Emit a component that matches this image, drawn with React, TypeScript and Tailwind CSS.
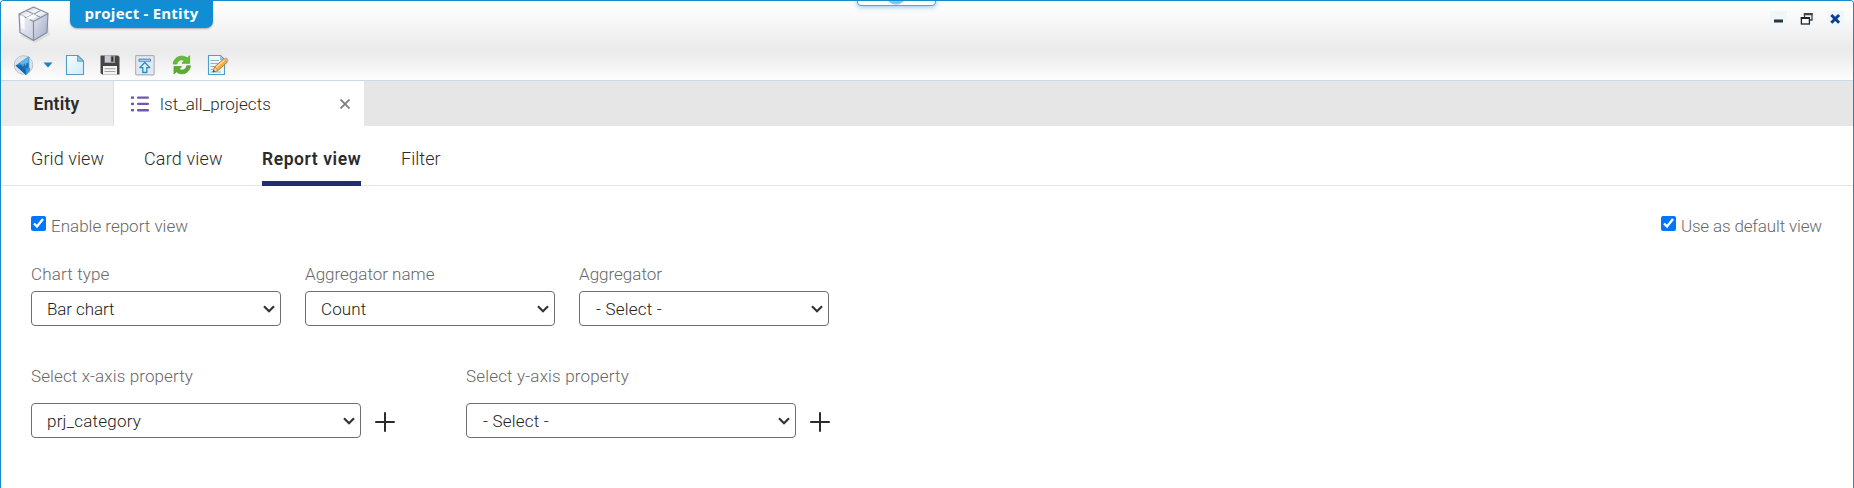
import React from "react";

function CubeIcon() {
  return (
    <svg width="36" height="40" viewBox="0 0 36 40" className="shrink-0">
      <defs>
        <linearGradient id="cubeTop" x1="0" y1="0" x2="1" y2="1">
          <stop offset="0" stopColor="#b9bfd2" />
          <stop offset="0.5" stopColor="#ffffff" />
          <stop offset="1" stopColor="#b3bace" />
        </linearGradient>
        <linearGradient id="cubeLeft" x1="0" y1="0" x2="1" y2="1">
          <stop offset="0" stopColor="#f4f6fb" />
          <stop offset="1" stopColor="#c8cee0" />
        </linearGradient>
        <linearGradient id="cubeRight" x1="0" y1="0" x2="1" y2="1">
          <stop offset="0" stopColor="#e4e8f2" />
          <stop offset="1" stopColor="#9fa8c2" />
        </linearGradient>
      </defs>
      <path d="M5 33 L20 40 L35 32 L33 20 Z" fill="#000" opacity="0.08" />
      <path d="M4 11 L18.5 4 L33 10.5 L18.5 18.5 Z" fill="url(#cubeTop)" />
      <path d="M4 11 L18.5 18.5 V37.5 L5 29.5 Z" fill="url(#cubeLeft)" />
      <path d="M18.5 18.5 L33 10.5 L32 29.5 L18.5 37.5 Z" fill="url(#cubeRight)" />
      <path d="M4 11 L18.5 4 L33 10.5 L32 29.5 L18.5 37.5 L5 29.5 Z M4 11 L18.5 18.5 L33 10.5 M18.5 18.5 V37.5" fill="none" stroke="#868b9b" strokeWidth="1.2" strokeLinejoin="round" />
      <path d="M11.2 7.5 L25.8 14.5 M11.2 14.8 L25.8 7.5" stroke="#9499a8" strokeWidth="1.2" />
      <path d="M5.5 11.5 L9.5 13.5 V28 L8 25 L6.5 26 Z" fill="#fff" opacity="0.8" />
      <path d="M10.5 15 L18.5 11 L22 13 L14 17 Z" fill="#fff" opacity="0.8" />
    </svg>
  );
}

function BackIcon() {
  return (
    <svg width="22" height="22" viewBox="0 0 22 22">
      <circle cx="10.5" cy="11" r="9.3" fill="#dde2e8" stroke="#bcc3cc" />
      <path d="M2.5 11.5 L15.5 2.5 L17 3.5 V16.5 L13 21 Z" fill="#2d8bd0" />
      <path d="M2.5 11.5 L8 11 L13 15.5 V21 Z" fill="#1767a9" />
      <path d="M6.5 9 L15.5 2.5 V8.5 L8.5 10.5 Z" fill="#62b5e8" />
      <path d="M8.5 11 L15.5 9.2 V13.5 L12.5 14.6 Z" fill="#1b6fb3" />
      <path d="M13 15.5 L17 14 V16.5 L13 21 Z" fill="#3c9ad9" />
      <path d="M16.4 3.6 V14" stroke="#a9d8f5" strokeWidth="1" />
      <path d="M10 9.8 V12 M12.6 9.2 V11.5" stroke="#7cc6f0" strokeWidth="0.9" />
    </svg>
  );
}

function NewIcon() {
  return (
    <svg width="20" height="22" viewBox="0 0 20 22">
      <defs>
        <linearGradient id="page" x1="0" y1="0" x2="1" y2="1">
          <stop offset="0" stopColor="#f7fcff" />
          <stop offset="1" stopColor="#cfeafb" />
        </linearGradient>
      </defs>
      <path d="M1.5 1.5 H13 L18.5 7 V20.5 H1.5 Z" fill="url(#page)" stroke="#4f9dca" strokeWidth="1.1" />
      <path d="M12.5 1.5 V7.3 H18.5 Z" fill="#8ec6e8" stroke="#4f9dca" strokeWidth="0.8" />
    </svg>
  );
}

function SaveIcon() {
  return (
    <svg width="20" height="22" viewBox="0 0 20 22">
      <path d="M1 1.5 H18 L19.5 3 V20.5 H2 L0.5 19 V1.5 Z" fill="#454545" />
      <rect x="4.5" y="1.5" width="10.5" height="7.5" fill="#9b9da3" />
      <rect x="5" y="1.5" width="5.5" height="6.5" fill="#c9cbd1" />
      <rect x="11.3" y="2.5" width="2" height="5" fill="#303030" />
      <rect x="3" y="12" width="14" height="8.5" fill="#f3f4f6" />
      <path d="M4.5 14.8 H15.5 M4.5 17.5 H15.5" stroke="#a1a3a8" strokeWidth="1.1" />
    </svg>
  );
}

function UploadIcon() {
  return (
    <svg width="20" height="21" viewBox="0 0 20 21">
      <rect x="0.7" y="0.7" width="18.4" height="19.2" rx="0.8" fill="#eef0f4" stroke="#a9b0bd" strokeWidth="1.2" />
      <rect x="2" y="2" width="16" height="16.6" fill="#e3e7ee" />
      <path d="M4 4.2 H15.5 V6.2 H4 Z" fill="#d5effd" stroke="#2989c2" />
      <path d="M9.8 7.5 L14.8 12.6 H11.8 V17.5 H7.8 V12.6 H4.8 Z" fill="#d5effd" stroke="#2989c2" strokeWidth="1.3" strokeLinejoin="round" />
    </svg>
  );
}

function RefreshIcon() {
  return (
    <svg width="20" height="20" viewBox="0 0 20 20">
      <path d="M1.2 9 C1.8 4.2 5.2 1.2 9.8 1.2 C12 1.2 13.7 1.9 15.2 3.1 L17.6 0.9 V8.3 H10 L12.4 5.8 C11.5 5.1 10.7 4.8 9.7 4.8 C7.2 4.8 5.4 6.4 4.8 9 Z" fill="#66ba38" stroke="#56a72e" strokeWidth="0.8" />
      <path d="M18.4 10.8 C17.8 15.6 14.6 18.8 10 18.8 C7.8 18.8 6 18.1 4.4 16.8 L2 19 V11.6 H9.6 L7.2 14.1 C8.1 14.9 9 15.2 10 15.2 C12.4 15.2 14.2 13.5 14.8 10.8 Z" fill="#5aad33" stroke="#4e9c29" strokeWidth="0.8" />
    </svg>
  );
}

function EditIcon() {
  return (
    <svg width="22" height="22" viewBox="0 0 22 22">
      <path d="M1.5 1.5 H13.5 L17.5 5.5 V20.5 H1.5 Z" fill="#ecf7fe" stroke="#4f9dca" strokeWidth="1.1" />
      <path d="M13 1.5 V6 H17.5 Z" fill="#8ec6e8" />
      <path d="M3.5 6.5 H12 M3.5 9.5 H12 M3.5 12.5 H8 M3.5 15.5 H6 M3.5 18 H14" stroke="#8bb4d0" strokeWidth="1" />
      <path d="M6 18 L7.7 12.8 L17 4.5 L20.3 8.2 L11 16.5 Z" fill="#f3ae3d" stroke="#b27a2b" strokeWidth="0.9" strokeLinejoin="round" />
      <path d="M9 13.4 L17.8 5.7" stroke="#ffe09a" strokeWidth="1.3" />
      <path d="M17 4.5 L18.4 3.5 C20 3.5 21.4 5 21.4 6.8 L20.3 8.2 Z" fill="#e5a3a0" />
      <path d="M6 18 L7.7 12.8 L11 16.5 Z" fill="#f5d7ab" stroke="#b27a2b" strokeWidth="0.7" />
      <path d="M6 18 L6.6 16 L8 17.3 Z" fill="#222" />
    </svg>
  );
}

function ListIcon() {
  return (
    <svg width="18" height="16" viewBox="0 0 18 16" className="shrink-0">
      <g fill="#7059a8">
        <rect x="0" y="0.4" width="3" height="2.4" />
        <rect x="0" y="6.7" width="3" height="2.4" />
        <rect x="0" y="13" width="3" height="2.4" />
        <rect x="6" y="0.4" width="12" height="2.4" rx="1" />
        <rect x="6" y="6.7" width="12" height="2.4" rx="1" />
        <rect x="6" y="13" width="12" height="2.4" rx="1" />
      </g>
    </svg>
  );
}

function PlusIcon() {
  return (
    <svg width="20" height="20" viewBox="0 0 20 20" className="mt-px ml-3.5">
      <path d="M10 1 V19 M1 10 H19" stroke="#2b2b2b" strokeWidth="2" strokeLinecap="round" />
    </svg>
  );
}

function WindowButtons() {
  return (
    <div className="mt-[10px] mr-[9px] flex gap-[12.5px]">
      <svg width="17" height="17" viewBox="0 0 17 17" className="bg-[#f0f7fb]">
        <rect x="4" y="8.5" width="9" height="3" fill="#333" />
      </svg>
      <svg width="15" height="17" viewBox="0 0 15 17" className="bg-[#f0f7fb]">
        <path d="M4.5 6.5 V3.2 H12 V9 H9.8" fill="none" stroke="#444" strokeWidth="1.3" />
        <path d="M3.8 3.2 H12.7" stroke="#444" strokeWidth="2.2" />
        <rect x="1.4" y="7" width="8" height="6" fill="#fff" stroke="#222" strokeWidth="1.3" />
        <path d="M0.8 7 H10" stroke="#222" strokeWidth="2" />
      </svg>
      <svg width="17" height="17" viewBox="0 0 17 17" className="bg-[#f0f7fb]">
        <path d="M4.3 4 L12.1 11.7 M12.1 4 L4.3 11.7" stroke="#0b3f8c" strokeWidth="3" />
      </svg>
    </div>
  );
}

interface FieldProps {
  label: string;
  value: string;
  labelClass: string;
  selectClass: string;
}

function Field({ label, value, labelClass, selectClass }: FieldProps) {
  return (
    <label className="flex flex-col">
      <span className={"text-[17px] leading-5 whitespace-nowrap text-[#686868] " + labelClass}>{label}</span>
      <span className="grid items-center">
        <select
          defaultValue={value}
          className={"col-start-1 row-start-1 h-[35px] appearance-none rounded-[4px] border border-[#6f6f6f] bg-white pt-[2px] text-[17px] text-[#222] " + selectClass}
        >
          <option>{value}</option>
        </select>
        <svg width="12" height="8" viewBox="0 0 12 8" className="pointer-events-none col-start-1 row-start-1 mr-[6px] justify-self-end">
          <path d="M1 1.2 L6 6.2 L11 1.2" fill="none" stroke="#333" strokeWidth="2.2" />
        </svg>
      </span>
    </label>
  );
}

function Check({ label, className }: { label: string; className: string }) {
  return (
    <label className="flex items-start">
      <input type="checkbox" defaultChecked className="size-[15px] accent-[#0075ff]" />
      <span className={"ml-[5px] text-[17px] leading-5 text-[#686868] " + className}>{label}</span>
    </label>
  );
}

export default function App() {
  return (
    <div className="relative flex h-[488px] w-full flex-col overflow-hidden rounded-t-[4px] border-x border-t border-[#168acb] bg-white font-['Roboto',sans-serif] font-[350] text-[#2b2b2b]">
      <div className="absolute -top-3 left-[856px] flex h-[17px] w-[79px] justify-center overflow-visible rounded-b-[4px] border border-[#45a9e6] bg-white shadow-[0_1px_5px_rgba(40,150,220,0.55)]">
        <svg width="20" height="15" viewBox="0 0 20 15" className="-ml-0.5">
          <circle cx="10" cy="4" r="10.5" fill="#7cc5f5" />
        </svg>
      </div>

      <header className="flex h-20 shrink-0 flex-col border-b border-[#c9daea] bg-[linear-gradient(#ffffff_0%,#f8f8f8_25%,#ebebeb_58%,#ebebeb_66%,#fcfcfc_98%)]">
        <div className="flex h-[52px] items-start">
          <div className="ml-[14px] pt-[2px]">
            <CubeIcon />
          </div>
          <div className="-mt-px ml-[19px] flex h-[28px] w-[143px] items-center justify-center rounded-b-[7px] bg-[#108dd3] pb-px font-['Open_Sans',sans-serif] text-[15px] font-bold tracking-[0.22px] whitespace-nowrap text-white shadow-[0_1px_2px_rgba(0,0,0,0.3)]">
            project - Entity
          </div>
          <div className="ml-auto">
            <WindowButtons />
          </div>
        </div>
        <div className="flex h-[24px] items-center pl-3">
          <BackIcon />
          <svg width="10" height="6" viewBox="0 0 10 6" className="mr-[12px] ml-2">
            <path d="M0.5 0.5 H9.5 L5 5.5 Z" fill="#1d7fc8" />
          </svg>
          <div className="flex w-[35px]"><NewIcon /></div>
          <div className="flex w-[35px]"><SaveIcon /></div>
          <div className="flex w-[37px]"><UploadIcon /></div>
          <div className="flex w-[35px]"><RefreshIcon /></div>
          <EditIcon />
        </div>
      </header>

      <div className="flex h-[45px] shrink-0 bg-[#e6e6e6]">
        <div className="flex w-[113px] items-center justify-center border-r border-[#dedede] bg-[#ededed] pt-[2px] pr-px text-[17.5px] font-semibold tracking-[0.2px]">
          Entity
        </div>
        <div className="flex w-[250px] items-center bg-white pr-[14px] pl-[17px]">
          <ListIcon />
          <span className="ml-[11px] pt-[2px] text-[17px] tracking-[0.1px]">lst_all_projects</span>
          <svg width="10" height="10" viewBox="0 0 10 10" className="ml-auto">
            <path d="M0.5 0.5 L9.5 9.5 M9.5 0.5 L0.5 9.5" stroke="#7b7b7b" strokeWidth="1.7" />
          </svg>
        </div>
      </div>

      <nav className="flex h-[60px] shrink-0 border-b border-[#e4e4e4] pl-[30px] text-[18px] leading-5 whitespace-nowrap">
        <div className="w-[113px] pt-[23px] tracking-[0.08px]">Grid view</div>
        <div className="w-[118px] pt-[23px] tracking-[0.17px]">Card view</div>
        <div className="h-[60px] w-[99px] border-b-[5px] border-[#222c72] pt-[23px] text-[17.5px] font-semibold tracking-[0.57px]">Report view</div>
        <div className="ml-10 pt-[23px] tracking-[0.05px]">Filter</div>
      </nav>

      <main className="flex flex-col pt-[30px] pr-[31px] pl-[30px]">
        <div className="flex justify-between">
          <Check label="Enable report view" className="" />
          <Check label="Use as default view" className="tracking-[-0.15px]" />
        </div>
        <div className="mt-[28px] flex gap-6">
          <Field label="Chart type" value="Bar chart" labelClass="mb-[7px] tracking-[0.15px]" selectClass="w-[250px] pl-[15px] tracking-[-0.1px]" />
          <Field label="Aggregator name" value="Count" labelClass="mb-[7px]" selectClass="w-[250px] pl-[15px] tracking-[0.15px]" />
          <Field label="Aggregator" value="- Select -" labelClass="mb-[7px]" selectClass="w-[250px] pl-4 tracking-[0.2px]" />
        </div>
        <div className="mt-[40px] flex gap-[71px]">
          <div className="flex items-end">
            <Field label="Select x-axis property" value="prj_category" labelClass="mb-[17px] tracking-[0.12px]" selectClass="w-[330px] pl-[15px] tracking-[0.22px]" />
            <div className="pb-[6px]"><PlusIcon /></div>
          </div>
          <div className="flex items-end">
            <Field label="Select y-axis property" value="- Select -" labelClass="mb-[17px] tracking-[0.17px]" selectClass="w-[330px] pl-4 tracking-[0.2px]" />
            <div className="pb-[6px]"><PlusIcon /></div>
          </div>
        </div>
      </main>
    </div>
  );
}
